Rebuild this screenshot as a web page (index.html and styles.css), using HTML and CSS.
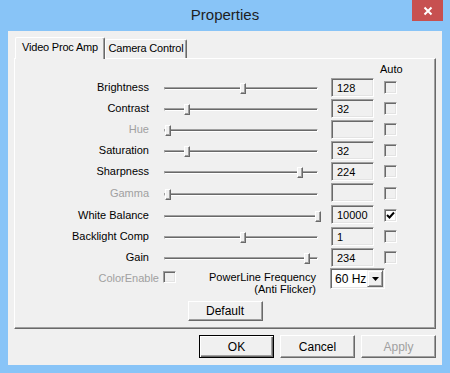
FILE: index.html
```html
<!DOCTYPE html>
<html>
<head>
  <link rel="stylesheet" href="styles.css">
</head>
<body>
  <div class="window">
    <div class="titlebar">
      <span class="title">Properties</span>
      <div class="close">
        <svg width="10" height="10" viewBox="0 0 10 10"><path d="M1.5 1.5 L8.5 8.5 M8.5 1.5 L1.5 8.5" stroke="#fff" stroke-width="2"/></svg>
      </div>
    </div>

    <div class="client">
      <div class="tabs">
        <div class="tab active">Video Proc Amp</div>
        <div class="tab">Camera Control</div>
      </div>

      <div class="panel">
        <div class="auto-head">Auto</div>

        <div class="row">
          <span class="label">Brightness</span>
          <div class="slider"><div class="thumb" style="left: 75px"></div></div>
          <div class="value">128</div>
          <div class="check"></div>
        </div>
        <div class="row">
          <span class="label">Contrast</span>
          <div class="slider"><div class="thumb" style="left: 19px"></div></div>
          <div class="value">32</div>
          <div class="check"></div>
        </div>
        <div class="row disabled">
          <span class="label">Hue</span>
          <div class="slider"><div class="thumb" style="left: 0px"></div></div>
          <div class="value"></div>
          <div class="check"></div>
        </div>
        <div class="row">
          <span class="label">Saturation</span>
          <div class="slider"><div class="thumb" style="left: 19px"></div></div>
          <div class="value">32</div>
          <div class="check"></div>
        </div>
        <div class="row">
          <span class="label">Sharpness</span>
          <div class="slider"><div class="thumb" style="left: 132px"></div></div>
          <div class="value">224</div>
          <div class="check"></div>
        </div>
        <div class="row tall disabled">
          <span class="label">Gamma</span>
          <div class="slider"><div class="thumb" style="left: 0px"></div></div>
          <div class="value"></div>
          <div class="check"></div>
        </div>
        <div class="row tall">
          <span class="label">White Balance</span>
          <div class="slider"><div class="thumb" style="left: 150px"></div></div>
          <div class="value">10000</div>
          <div class="check checked">
            <svg width="9" height="9" viewBox="0 0 9 9"><path d="M1 4 L3.5 6.5 L8 1.5" stroke="#000" stroke-width="2" fill="none"/></svg>
          </div>
        </div>
        <div class="row">
          <span class="label">Backlight Comp</span>
          <div class="slider"><div class="thumb" style="left: 75px"></div></div>
          <div class="value">1</div>
          <div class="check"></div>
        </div>
        <div class="row">
          <span class="label">Gain</span>
          <div class="slider"><div class="thumb" style="left: 139px"></div></div>
          <div class="value">234</div>
          <div class="check"></div>
        </div>

        <div class="extra">
          <span class="label wide disabled-text">ColorEnable</span>
          <div class="check small"></div>
          <div class="powerline">PowerLine Frequency<br>(Anti Flicker)</div>
          <div class="combo">
            <span class="combo-text">60 Hz</span>
            <div class="combo-btn">
              <svg width="7" height="4" viewBox="0 0 7 4"><path d="M0 0 H7 L3.5 4 Z" fill="#000"/></svg>
            </div>
          </div>
        </div>

        <div class="panel-foot">
          <button class="btn">Default</button>
        </div>
      </div>

      <div class="actions">
        <button class="btn default">OK</button>
        <button class="btn">Cancel</button>
        <button class="btn disabled-text">Apply</button>
      </div>
    </div>
  </div>
</body>
</html>
```

FILE: styles.css
```css
* {
  margin: 0;
  padding: 0;
  box-sizing: border-box;
}

body {
  font-family: "Liberation Sans", Arial, sans-serif;
  font-size: 11px;
  color: #000;
  background: #88c4f7;
}

.window {
  width: 450px;
  height: 373px;
  background: #88c4f7;
  padding: 0 8px 8px;
  display: flex;
  flex-direction: column;
}

/* Title bar */
.titlebar {
  height: 31px;
  position: relative;
  text-align: center;
}

.title {
  display: inline-block;
  font-size: 15px;
  line-height: 30px;
  color: #1e1e1e;
}

.close {
  position: absolute;
  top: 0;
  right: -1px;
  width: 31px;
  height: 21px;
  background: #c75050;
  display: flex;
  align-items: center;
  justify-content: center;
}

/* Client area */
.client {
  flex: 1;
  background: #f0f0f0;
  padding: 6px 6px 0;
  display: flex;
  flex-direction: column;
}

.tabs {
  display: flex;
  align-items: flex-end;
  height: 21px;
  padding-left: 1px;
}

.tab {
  height: 19px;
  line-height: 17px;
  border-top: 1px solid #fff;
  border-left: 1px solid #fff;
  border-right: 1px solid #696969;
  border-radius: 2px 2px 0 0;
  box-shadow: inset -1px 0 #a0a0a0;
  background: #f0f0f0;
  width: 82px;
  text-align: center;
  white-space: nowrap;
  letter-spacing: -0.2px;
}

.tab.active {
  height: 22px;
  width: 90px;
  margin-bottom: -1px;
  line-height: 19px;
  position: relative;
  z-index: 1;
}

.panel {
  height: 271px;
  border: 1px solid #696969;
  border-top-color: #fff;
  border-left-color: #fff;
  box-shadow: inset -1px -1px #a0a0a0;
}

.auto-head {
  height: 19px;
  padding-left: 365px;
  line-height: 20px;
}

/* Slider rows */
.row {
  display: flex;
  align-items: center;
  height: 21px;
}

.row.tall {
  height: 22px;
}

.label {
  width: 134px;
  text-align: right;
  white-space: nowrap;
  margin-bottom: 3px;
}

.disabled .label,
.disabled-text {
  color: #a0a0a0;
}

.slider {
  position: relative;
  width: 154px;
  height: 3px;
  margin-left: 15px;
  border-top: 1px solid #a0a0a0;
  border-left: 1px solid #a0a0a0;
  border-bottom: 1px solid #fff;
  border-right: 1px solid #fff;
  background: #696969;
}

.thumb {
  position: absolute;
  top: -5px;
  width: 6px;
  height: 11px;
  background: #f0f0f0;
  border-top: 1px solid #fff;
  border-left: 1px solid #fff;
  border-right: 1px solid #696969;
  border-bottom: 1px solid #696969;
  box-shadow: inset -1px -1px #a0a0a0;
}

.value {
  width: 43px;
  height: 19px;
  margin-left: 13px;
  align-self: flex-start;
  padding: 2px 0 0 5px;
  line-height: 14px;
  border: 1px solid #fff;
  border-top-color: #a0a0a0;
  border-left-color: #a0a0a0;
  box-shadow: inset 1px 1px #696969, inset -1px -1px #e3e3e3;
}

.check {
  width: 13px;
  height: 13px;
  margin-left: 10px;
  margin-bottom: 2px;
  border: 1px solid #fff;
  border-top-color: #a0a0a0;
  border-left-color: #a0a0a0;
  box-shadow: inset 1px 1px #696969, inset -1px -1px #e3e3e3;
  display: flex;
  align-items: center;
  justify-content: center;
}

.check.checked {
  background: #fff;
}

/* ColorEnable / PowerLine row */
.extra {
  display: flex;
  align-items: flex-start;
  margin-top: -1px;
}

.label.wide {
  width: 144px;
  margin-top: 3px;
  line-height: 14px;
}

.check.small {
  margin-left: 4px;
  margin-top: 3px;
  height: 12px;
}

.powerline {
  width: 140px;
  text-align: right;
  margin-top: 3px;
  line-height: 12px;
}

.combo {
  display: flex;
  align-items: center;
  width: 55px;
  height: 21px;
  margin-left: 14px;
  background: #fff;
  border: 1px solid #fff;
  border-top-color: #a0a0a0;
  border-left-color: #a0a0a0;
  box-shadow: inset 1px 1px #696969, inset -1px -1px #e3e3e3;
  padding: 1px 1px 1px 4px;
}

.combo-text {
  flex: 1;
  font-size: 12px;
  white-space: nowrap;
}

.combo-btn {
  width: 16px;
  height: 17px;
  flex-shrink: 0;
  background: #f0f0f0;
  border: 1px solid #696969;
  border-top-color: #f0f0f0;
  border-left-color: #f0f0f0;
  box-shadow: inset 1px 1px #fff, inset -1px -1px #a0a0a0;
  display: flex;
  align-items: center;
  justify-content: center;
}

.panel-foot {
  display: flex;
  justify-content: center;
  margin-top: 6px;
}

/* Buttons */
.btn {
  width: 75px;
  height: 20px;
  font-family: inherit;
  font-size: 12px;
  background: #f0f0f0;
  border: 1px solid #696969;
  border-top-color: #fff;
  border-left-color: #fff;
  box-shadow: inset -1px -1px #a0a0a0;
}

.actions {
  display: flex;
  justify-content: flex-end;
  gap: 6px;
  margin-top: 6px;
}

.actions .btn {
  height: 23px;
}

.btn.default {
  border: 1px solid #000;
  box-shadow: inset 1px 1px #fff, inset -1px -1px #696969, inset -2px -2px #a0a0a0;
}

.btn.disabled-text {
  color: #a0a0a0;
}
```
